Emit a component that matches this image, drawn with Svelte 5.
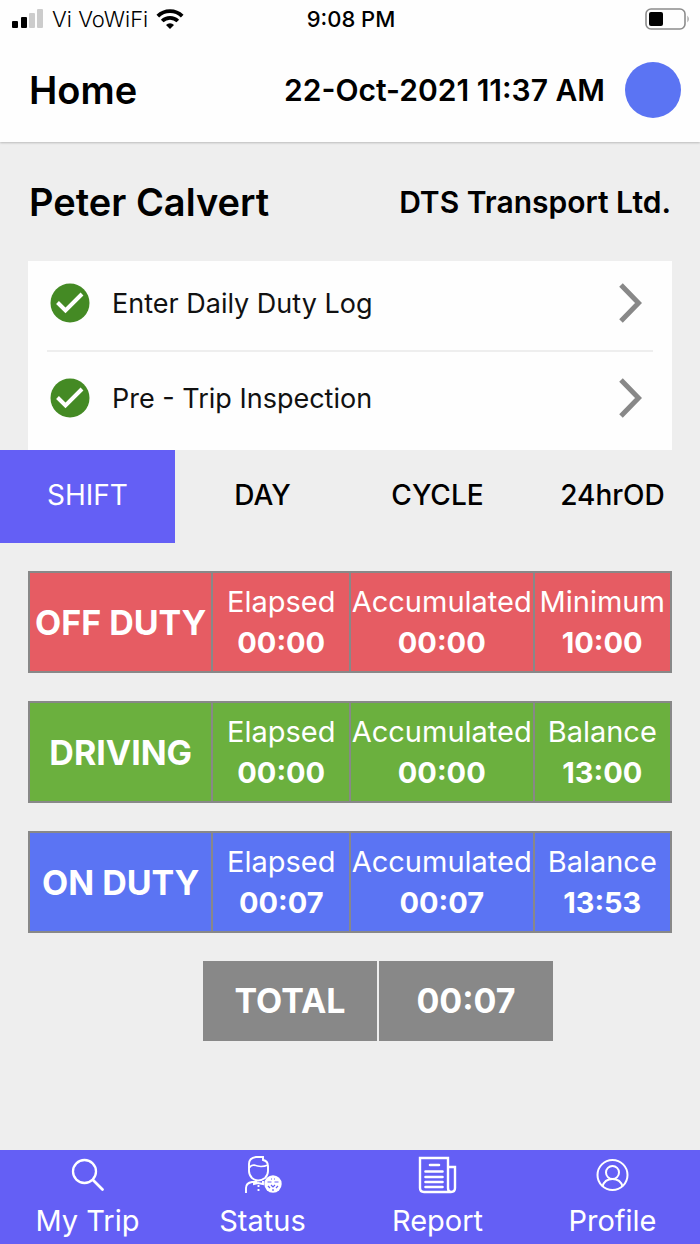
<script lang="ts">
	let activePeriod = 'SHIFT';

	const periods = ['SHIFT', 'DAY', 'CYCLE', '24hrOD'];

	const tasks = ['Enter Daily Duty Log', 'Pre - Trip Inspection'];

	const duties = [
		{ name: 'OFF DUTY', kind: 'off', times: [['Elapsed', '00:00'], ['Accumulated', '00:00'], ['Minimum', '10:00']] },
		{ name: 'DRIVING', kind: 'driving', times: [['Elapsed', '00:00'], ['Accumulated', '00:00'], ['Balance', '13:00']] },
		{ name: 'ON DUTY', kind: 'on', times: [['Elapsed', '00:07'], ['Accumulated', '00:07'], ['Balance', '13:53']] }
	];

	const links = ['My Trip', 'Status', 'Report', 'Profile'];
</script>

<div class="screen">
	<header>
		<div class="status-bar">
			<div class="carrier">
				<svg width="32" height="20" viewBox="0 0 32 20">
					<rect x="0" y="12" width="6" height="7" rx="1" />
					<rect x="9" y="8" width="6" height="11" rx="1" />
					<rect x="17" y="4" width="6" height="15" rx="1" fill="#ccc" />
					<rect x="25" y="0" width="6" height="19" rx="1" fill="#ccc" />
				</svg>
				<span>Vi VoWiFi</span>
				<svg width="28" height="20" viewBox="0 0 28 20">
					<g fill="none" stroke="#000" stroke-width="3.8">
						<path d="M1.8 7.2a17.4 17.4 0 0 1 24.4 0" />
						<path d="M6.2 12a11.2 11.2 0 0 1 15.6 0" />
					</g>
					<path d="M14 20l-4-4a5.7 5.7 0 0 1 8 0z" />
				</svg>
			</div>
			<time>9:08 PM</time>
			<svg class="battery" width="45" height="22" viewBox="0 0 45 22">
				<rect x="1" y="1" width="39" height="20" rx="5" fill="none" stroke="#8c8c8c" stroke-width="1.6" />
				<rect x="4" y="4" width="14" height="14" rx="2" />
				<path d="M42.5 7.5q2.4 3.5 0 7z" fill="#8c8c8c" />
			</svg>
		</div>
		<div class="title-bar">
			<h1>Home</h1>
			<span class="stamp">22-Oct-2021 11:37 AM</span>
			<span class="duty-dot"></span>
		</div>
	</header>

	<main>
		<div class="driver">
			<h2>Peter Calvert</h2>
			<span class="company">DTS Transport Ltd.</span>
		</div>

		<ul class="tasks">
			{#each tasks as task}
				<li>
					<button type="button">
						<svg width="40" height="40" viewBox="0 0 40 40">
							<circle cx="20" cy="20" r="19.5" fill="#448a24" />
							<path d="M7.5 19.5l8 8L32 11" fill="none" stroke="#fff" stroke-width="4" />
						</svg>
						<span>{task}</span>
						<svg width="24" height="40" viewBox="0 0 24 40">
							<path d="M2 2l17.5 18L2 38" fill="none" stroke="#888" stroke-width="5" />
						</svg>
					</button>
				</li>
			{/each}
		</ul>

		<div class="periods">
			{#each periods as period}
				<button
					type="button"
					class:active={period === activePeriod}
					on:click={() => (activePeriod = period)}
				>{period}</button>
			{/each}
		</div>

		<table class="duties">
			<tbody>
				{#each duties as duty}
					<tr class={duty.kind}>
						<th scope="row">{duty.name}</th>
						{#each duty.times as [label, value]}
							<td>{label}<strong>{value}</strong></td>
						{/each}
					</tr>
				{/each}
			</tbody>
		</table>

		<div class="total">
			<span>TOTAL</span>
			<span>00:07</span>
		</div>
	</main>

	<nav>
		{#each links as link}
			<a href="#{link.toLowerCase().replace(' ', '-')}">
				<svg width="40" height="40" viewBox="0 0 40 40" fill="none" stroke="#fff" stroke-width="2">
					{#if link === 'My Trip'}
						<circle cx="16.5" cy="16.5" r="11.5" stroke-width="2.3" />
						<path d="M25 25l9.5 9.5" stroke-width="2.8" stroke-linecap="round" />
					{:else if link === 'Status'}
						<g stroke-width="1.9">
							<path d="M6 13V9q0-6 7-7h7v3q5 1 5 6v5q0 4-3 7-7 5-13 0-3-3-3-7z" />
							<path d="M6 13q2-3 5-3 7 3 14 0" stroke-width="1.6" />
							<path d="M3 38v-5q0-5 6-6h4l1-2M11 26v3l4-1 5 1v-3" />
							<path d="M15.5 30v8" stroke-dasharray="2 2" />
						</g>
						<circle cx="30" cy="29" r="8.7" fill="#fff" stroke="none" />
						<g stroke="#645ff5" stroke-width="1.2">
							<path d="M24.5 27h4M31.5 27h4M28 24h1M31 24h1M28 30l2 2 2-2M25 31l2 2M35 31l-2 2M30 34v2" />
						</g>
					{:else if link === 'Report'}
						<path d="M30 33V3H2v30q0 4 4 4h27M30 12h7v21q0 4-4 4-3 0-3-4" stroke-width="2.4" />
						<path d="M12 10h9M7.5 16.5h17M7.5 22h17M7.5 27h17M7.5 32h17" stroke-width="2.6" stroke-linecap="round" />
					{:else}
						<circle cx="19.5" cy="20" r="15" />
						<circle cx="19.5" cy="17.5" r="6.5" />
						<path d="M9.5 31.5q2-7.5 10-7.5t10 7.5" />
					{/if}
				</svg>
				{link}
			</a>
		{/each}
	</nav>
</div>

<style>
	:global(body) {
		margin: 0;
		background: #eee;
	}

	.screen {
		display: flex;
		flex-direction: column;
		min-height: 100vh;
		color: #000;
		font-family: Inter, 'Liberation Sans', sans-serif;
	}

	header {
		background: #fefefe;
		box-shadow: 0 1px 2px #bbb;
	}

	.status-bar {
		display: grid;
		grid-template-columns: 1fr auto 1fr;
		align-items: center;
		height: 38px;
		padding: 0 10px 0 12px;
		font-size: 22px;
	}

	.carrier {
		display: flex;
		align-items: center;
		gap: 8px;
	}

	.carrier span {
		font-weight: 300;
	}

	.status-bar time {
		font-weight: 500;
	}

	.battery {
		justify-self: end;
	}

	.title-bar {
		display: flex;
		align-items: center;
		height: 104px;
		box-sizing: border-box;
		padding: 0 19px 0 29px;
	}

	h1,
	h2 {
		margin: 0;
		font-size: 38px;
		font-weight: 600;
	}

	.stamp,
	.company {
		margin-left: auto;
		font-size: 30px;
		font-weight: 600;
	}

	.duty-dot {
		width: 56px;
		height: 56px;
		margin-left: 20px;
		border-radius: 50%;
		background: #5b74f3;
	}

	main {
		flex: 1;
	}

	.driver {
		display: flex;
		align-items: center;
		height: 119px;
		padding: 0 29px;
	}

	.tasks {
		list-style: none;
		margin: 0 28px;
		padding: 0 19px 5px;
		background: #fefefe;
	}

	.tasks li {
		padding-bottom: 5px;
	}

	.tasks li + li {
		padding-top: 4px;
		border-top: 2px solid #eee;
	}

	.tasks button {
		display: flex;
		align-items: center;
		width: 100%;
		height: 84px;
		padding: 0 10px 0 3px;
		border: 0;
		background: none;
		color: #111;
		font: 400 27px Inter, 'Liberation Sans', sans-serif;
		text-align: left;
		cursor: pointer;
	}

	.tasks button span {
		flex: 1;
		padding-left: 22px;
	}

	.periods {
		display: grid;
		grid-template-columns: repeat(4, 1fr);
	}

	.periods button {
		height: 93px;
		padding: 0 0 4px;
		border: 0;
		background: none;
		color: #000;
		font: 500 28px Inter, 'Liberation Sans', sans-serif;
		cursor: pointer;
	}

	.periods button.active {
		background: #645ff5;
		color: #fff;
		font-weight: 400;
	}

	.duties {
		width: calc(100% - 56px);
		margin: 0 28px;
		table-layout: fixed;
		border-spacing: 0 28px;
		color: #fff;
	}

	.duties th,
	.duties td {
		box-sizing: border-box;
		height: 102px;
		padding: 0;
		border: 2px solid #888;
		border-left-width: 0;
		font-size: 29px;
		line-height: 41px;
		text-align: center;
		white-space: nowrap;
	}

	.duties th {
		width: 28.8%;
		border-left-width: 2px;
		font-size: 34px;
		font-weight: 700;
	}

	.duties td:nth-child(3) {
		width: 28.5%;
	}

	.duties strong {
		display: block;
		font-weight: 700;
	}

	.off {
		background: #e65c63;
	}

	.driving {
		background: #6bb03e;
	}

	.on {
		background: #5b74f3;
	}

	.total {
		display: grid;
		grid-template-columns: 1fr 1fr;
		gap: 2px;
		width: 50%;
		margin: 0 0 28px calc(25% + 28px);
		color: #fff;
		font-size: 34px;
		font-weight: 700;
		line-height: 80px;
		text-align: center;
	}

	.total span {
		background: #888;
	}

	nav {
		display: grid;
		grid-template-columns: repeat(4, 1fr);
		height: 94px;
		background: #645ff5;
	}

	nav a {
		display: flex;
		flex-direction: column;
		align-items: center;
		gap: 4px;
		padding-top: 5px;
		color: #fff;
		font-size: 29px;
		line-height: 44px;
		text-decoration: none;
	}
</style>
